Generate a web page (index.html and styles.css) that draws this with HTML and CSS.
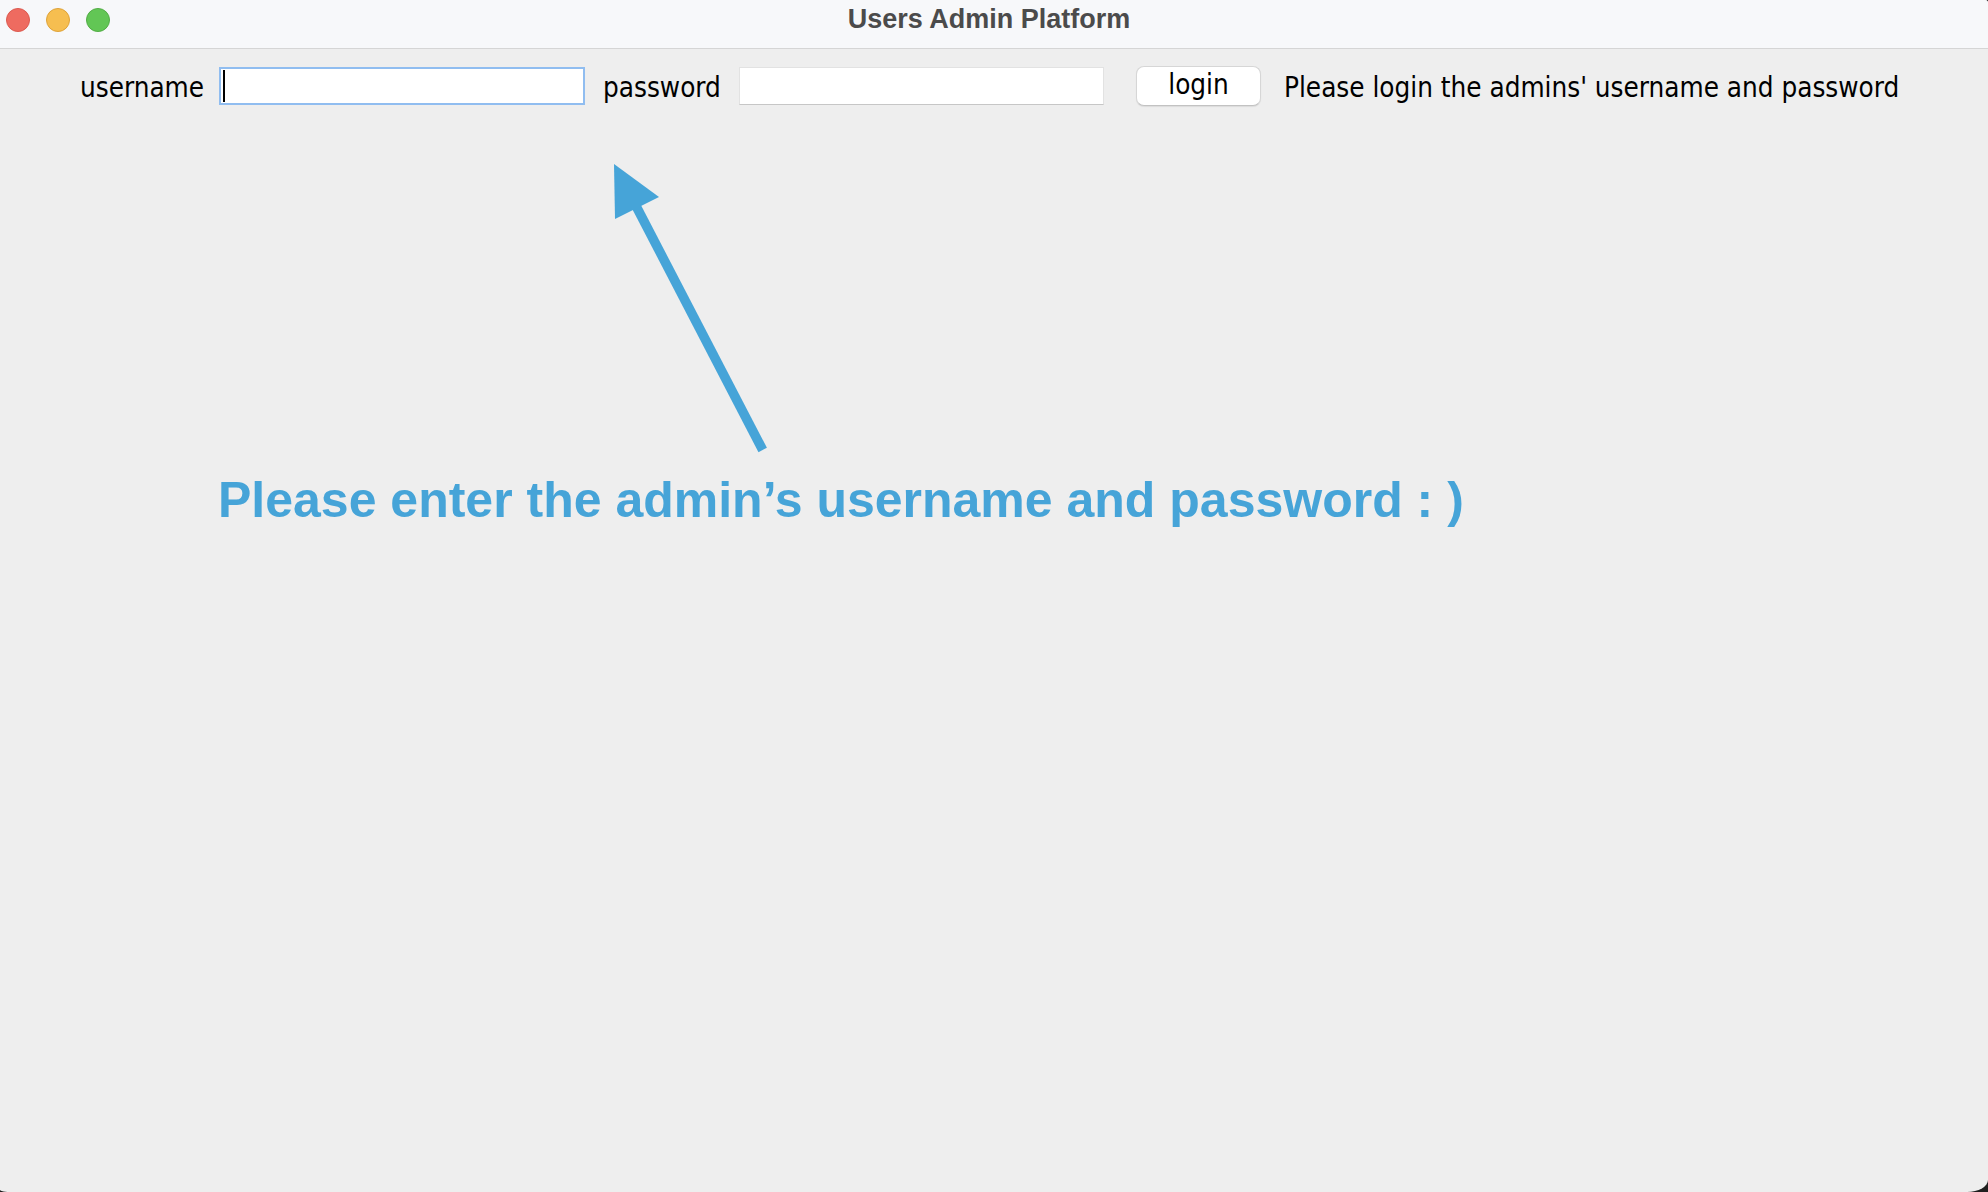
FILE: index.html
```html
<!DOCTYPE html>
<html lang="en">
<head>
<meta charset="utf-8">
<title>Users Admin Platform</title>
<link rel="stylesheet" href="styles.css">
</head>
<body>
<div class="window">
  <header class="titlebar">
    <div class="lights">
      <span class="light light-close"></span>
      <span class="light light-min"></span>
      <span class="light light-max"></span>
    </div>
    <div class="title">Users Admin Platform</div>
    <div class="titlebar-spacer"></div>
  </header>
  <main class="content">
    <div class="login-row">
      <span class="label label-user">username</span>
      <div class="field field-focused"><span class="caret"></span></div>
      <span class="label label-pass">password</span>
      <div class="field field-pass"></div>
      <button class="btn" type="button">login</button>
      <span class="label message">Please login the admins' username and password</span>
    </div>
    <div class="annotation">
      <svg class="arrow" width="180" height="310" viewBox="0 0 180 310">
        <line x1="35" y1="54" x2="162.7" y2="300" stroke="#46a4d8" stroke-width="9.5"/>
        <polygon points="14,14 15,69 59,47" fill="#46a4d8"/>
      </svg>
      <p class="note">Please enter the admin’s username and password : )</p>
    </div>
  </main>
</div>
</body>
</html>
```

FILE: styles.css
```css
html, body {
  margin: 0;
  padding: 0;
  background: #1f1f1f;
}

.window {
  width: 1988px;
  height: 1192px;
  overflow: hidden;
  background: #eeeeee;
  border-radius: 0 3px 21px 12px / 0 3px 12px 2px;
  display: flex;
  flex-direction: column;
}

.titlebar {
  height: 48px;
  flex: none;
  background: #f7f8fa;
  border-bottom: 1px solid #d5d5d5;
  display: grid;
  grid-template-columns: 1fr auto 1fr;
  align-items: start;
}

.lights {
  display: flex;
  gap: 16px;
  padding: 8px 0 0 6px;
}

.light {
  width: 24px;
  height: 24px;
  border-radius: 50%;
  box-sizing: border-box;
  display: block;
}

.light-close { background: #ee6b60; border: 1px solid #dc5a4f; }
.light-min   { background: #f6be50; border: 1px solid #dfa339; }
.light-max   { background: #62c655; border: 1px solid #52ad45; }

.title {
  margin-top: 6px;
  margin-right: 10px;
  font-family: "Liberation Sans", Arial, sans-serif;
  font-weight: bold;
  font-size: 27px;
  line-height: 26px;
  color: #4b4b4b;
  white-space: nowrap;
}

.content {
  flex: 1;
  position: relative;
}

.login-row {
  display: flex;
  align-items: center;
  padding: 17px 0 0 80px;
  height: 40px;
}

.label {
  font-family: "DejaVu Sans Condensed", "DejaVu Sans", sans-serif;
  font-size: 27.6px;
  color: #000;
  white-space: nowrap;
  padding-top: 3px;
}

.label-user { width: 139px; }
.label-pass { width: 136px; margin-left: 18px; }

.field {
  width: 366px;
  height: 38px;
  box-sizing: border-box;
  background: #ffffff;
  border: 1px solid #e2e2e2;
  border-bottom-color: #c6c6c6;
  position: relative;
}

.field-pass { width: 365px; }

.field-focused {
  border: 2px solid #90bdf0;
}

.caret {
  position: absolute;
  left: 2px;
  top: 1px;
  width: 2px;
  height: 32px;
  background: #000;
}

.btn {
  margin-left: 32px;
  width: 125px;
  height: 40px;
  box-sizing: border-box;
  background: #ffffff;
  border: 1px solid #d6d6d6;
  border-bottom-color: #c2c2c2;
  border-radius: 8px;
  box-shadow: 0 1px 1px rgba(0, 0, 0, 0.08);
  font-family: "DejaVu Sans Condensed", "DejaVu Sans", sans-serif;
  font-size: 27.6px;
  color: #000;
  padding: 0 0 3px 0;
  line-height: 1;
}

.message {
  margin-left: 23px;
}

.annotation {
  position: absolute;
  inset: 0;
  pointer-events: none;
}

.arrow {
  position: absolute;
  left: 600px;
  top: 101px;
  display: block;
}

.note {
  position: absolute;
  left: 218px;
  top: 426px;
  margin: 0;
  font-family: "Liberation Sans", Arial, sans-serif;
  font-weight: bold;
  font-size: 50px;
  line-height: 50px;
  color: #46a4d8;
  white-space: nowrap;
}
```
